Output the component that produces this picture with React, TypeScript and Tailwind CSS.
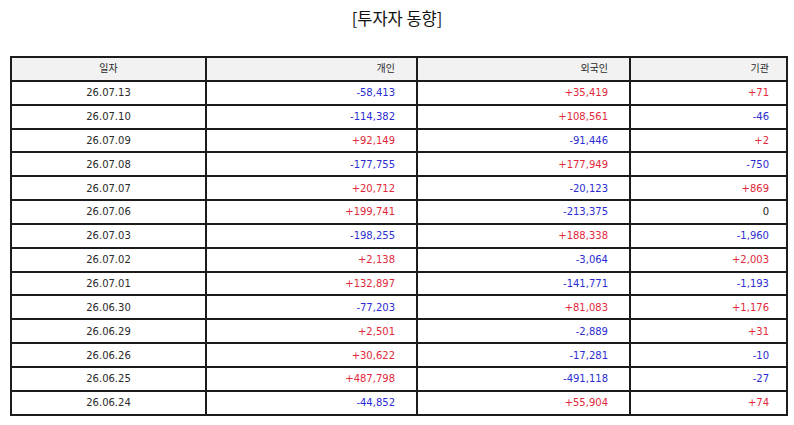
const rows: [string, string, string, string][] = [
  ['26.07.13', '-58,413', '+35,419', '+71'],
  ['26.07.10', '-114,382', '+108,561', '-46'],
  ['26.07.09', '+92,149', '-91,446', '+2'],
  ['26.07.08', '-177,755', '+177,949', '-750'],
  ['26.07.07', '+20,712', '-20,123', '+869'],
  ['26.07.06', '+199,741', '-213,375', '0'],
  ['26.07.03', '-198,255', '+188,338', '-1,960'],
  ['26.07.02', '+2,138', '-3,064', '+2,003'],
  ['26.07.01', '+132,897', '-141,771', '-1,193'],
  ['26.06.30', '-77,203', '+81,083', '+1,176'],
  ['26.06.29', '+2,501', '-2,889', '+31'],
  ['26.06.26', '+30,622', '-17,281', '-10'],
  ['26.06.25', '+487,798', '-491,118', '-27'],
  ['26.06.24', '-44,852', '+55,904', '+74'],
]

function tone(v: string) {
  if (v.startsWith('+')) return 'text-[#e2283a]'
  if (v.startsWith('-')) return 'text-[#2c2cd2]'
  return 'text-[#222]'
}

export default function App() {
  return (
    <div className="h-[425px] w-[794px] bg-white font-['DejaVu_Sans','Noto_Sans_CJK_KR',sans-serif] text-[10px] text-[#2a2a2a]">
      <div className="flex h-[56px] justify-center pt-[5px]">
        <h1 className="font-['Noto_Sans_CJK_KR',sans-serif] text-[16.5px] leading-[26px] text-[#111]">[투자자 동향]</h1>
      </div>
      <table className="ml-[10px] w-[776px] table-fixed border-collapse">
        <colgroup>
          <col className="w-[195px]" />
          <col className="w-[211px]" />
          <col className="w-[213px]" />
          <col className="w-[157px]" />
        </colgroup>
        <thead>
          <tr className="h-[23.85px] bg-[#f2f2f2]">
            <th className="border-2 border-[#1c1c1c] text-center font-normal">일자</th>
            <th className="border-2 border-[#1c1c1c] pr-[21px] text-right font-normal">개인</th>
            <th className="border-2 border-[#1c1c1c] pr-[21px] text-right font-normal">외국인</th>
            <th className="border-2 border-[#1c1c1c] pr-[17px] text-right font-normal">기관</th>
          </tr>
        </thead>
        <tbody>
          {rows.map(([d, a, b, c]) => (
            <tr key={d} className="h-[23.85px]">
              <td className="border-2 border-[#1c1c1c] text-center">{d}</td>
              <td className={`border-2 border-[#1c1c1c] pr-[21px] text-right ${tone(a)}`}>{a}</td>
              <td className={`border-2 border-[#1c1c1c] pr-[21px] text-right ${tone(b)}`}>{b}</td>
              <td className={`border-2 border-[#1c1c1c] pr-[17px] text-right ${tone(c)}`}>{c}</td>
            </tr>
          ))}
        </tbody>
      </table>
    </div>
  )
}
